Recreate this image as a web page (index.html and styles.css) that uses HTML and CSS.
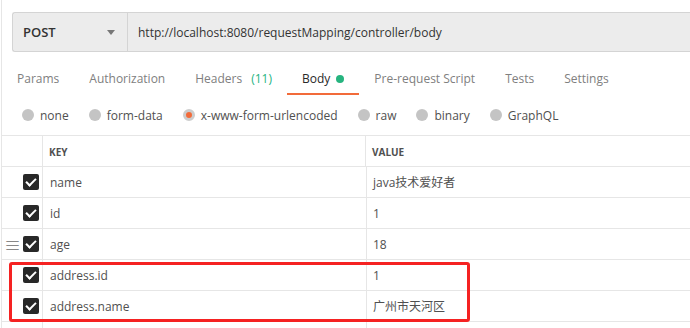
FILE: index.html
```html
<!DOCTYPE html>
<html>
<head>
<meta charset="utf-8">
<link rel="stylesheet" href="styles.css">
</head>
<body>
<div class="page">
    <div class="urlBar">
        <div class="method">POST<span class="caret"></span></div>
        <div class="url">http://localhost:8080/requestMapping/controller/body</div>
    </div>
    <div class="tabs">
        <div class="tab">Params</div>
        <div class="tab">Authorization</div>
        <div class="tab">Headers <span class="count">(11)</span></div>
        <div class="tab active">Body<span class="dot"></span></div>
        <div class="tab">Pre-request Script</div>
        <div class="tab">Tests</div>
        <div class="tab">Settings</div>
    </div>
    <div class="modes">
        <div class="mode"><span class="radio"></span>none</div>
        <div class="mode"><span class="radio"></span>form-data</div>
        <div class="mode"><span class="radio on"></span>x-www-form-urlencoded</div>
        <div class="mode"><span class="radio"></span>raw</div>
        <div class="mode"><span class="radio"></span>binary</div>
        <div class="mode"><span class="radio"></span>GraphQL</div>
    </div>
    <div class="table">
        <div class="row head">
            <div class="cell check"></div>
            <div class="cell key">KEY</div>
            <div class="cell value">VALUE</div>
        </div>
        <div class="row">
            <div class="cell check"><span class="box"></span></div>
            <div class="cell key">name</div>
            <div class="cell value">java技术爱好者</div>
        </div>
        <div class="row">
            <div class="cell check"><span class="box"></span></div>
            <div class="cell key">id</div>
            <div class="cell value">1</div>
        </div>
        <div class="row">
            <div class="cell check"><span class="handle">&#8801;</span><span class="box"></span></div>
            <div class="cell key">age</div>
            <div class="cell value">18</div>
        </div>
        <div class="row">
            <div class="cell check"><span class="box"></span></div>
            <div class="cell key">address.id</div>
            <div class="cell value">1</div>
        </div>
        <div class="row">
            <div class="cell check"><span class="box"></span></div>
            <div class="cell key">address.name</div>
            <div class="cell value">广州市天河区</div>
        </div>
        <div class="row">
            <div class="cell check"></div>
            <div class="cell key"></div>
            <div class="cell value"></div>
        </div>
    </div>
    <div class="mark"></div>
</div>
</body>
</html>
```

FILE: styles.css
```css
body{
    margin: 0;
    overflow: hidden;
    background: #fff;
    font-family: "Open Sans", "Noto Sans CJK SC", sans-serif;
    font-size: 12px;
    color: #505050;
}
.page{
    position: relative;
    box-sizing: border-box;
    margin-left: 1px;
    padding-top: 12px;
    height: 328px;
    overflow: hidden;
    border-left: 1px solid #e6e6e6;
}
.urlBar{
    display: flex;
    height: 38px;
    margin-left: 10px;
    background: #ececec;
    border: 1px solid #d4d4d4;
    border-right: none;
    border-radius: 3px 0 0 3px;
}
.method{
    display: flex;
    align-items: center;
    justify-content: space-between;
    width: 98px;
    padding: 0 6px 0 10px;
    border-right: 1px solid #d4d4d4;
    font-size: 13px;
    font-weight: 600;
    color: #333;
}
.caret{
    width: 0;
    height: 0;
    margin-right: 6px;
    border-left: 4px solid transparent;
    border-right: 4px solid transparent;
    border-top: 5px solid #777;
}
.url{
    display: flex;
    align-items: center;
    padding-left: 10px;
    font-size: 12px;
    color: #333;
}
.tabs{
    display: flex;
    margin-top: 12px;
}
.tab{
    display: flex;
    align-items: center;
    height: 29px;
    padding: 0 15px;
    border-bottom: 2px solid transparent;
    color: #808080;
    white-space: nowrap;
}
.tab .count{
    color: #26b47f;
    margin-left: 9px;
}
.tab.active{
    color: #282828;
    border-bottom-color: #f26b3a;
}
.dot{
    width: 8px;
    height: 8px;
    margin-left: 6px;
    border-radius: 50%;
    background: #26b47f;
}
.modes{
    display: flex;
    align-items: center;
    height: 40px;
    padding-left: 20px;
}
.mode{
    display: flex;
    align-items: center;
    margin-right: 20px;
    color: #505050;
    white-space: nowrap;
}
.radio{
    width: 12px;
    height: 12px;
    margin-right: 6px;
    border-radius: 50%;
    background: #c4c4c4;
}
.radio.on{
    box-sizing: border-box;
    border: 3px solid #cdcdcd;
    background: #f26b3a;
}
.table{
    border-top: 1px solid #e6e6e6;
}
.row{
    display: flex;
    height: 30px;
    border-bottom: 1px solid #e6e6e6;
}
.cell{
    display: flex;
    align-items: center;
}
.check{
    width: 41px;
    justify-content: flex-end;
    padding-right: 3px;
    box-sizing: border-box;
    border-right: 1px solid #e6e6e6;
    position: relative;
}
.key{
    width: 316px;
    padding-left: 7px;
    border-right: 1px solid #e6e6e6;
}
.value{
    flex: 1;
    padding-left: 6px;
}
.head .cell{
    padding-top: 1px;
    font-size: 10px;
    font-weight: 700;
    color: #505050;
}
.head .key{
    padding-left: 6px;
}
.box{
    width: 16px;
    height: 16px;
    border-radius: 2px;
    background: #282828;
    position: relative;
}
.box::after{
    content: "";
    position: absolute;
    left: 5px;
    top: 2px;
    width: 4px;
    height: 8px;
    border-right: 2px solid #fff;
    border-bottom: 2px solid #fff;
    transform: rotate(45deg);
}
.handle{
    position: absolute;
    left: 2px;
    font-size: 17px;
    color: #888;
}
.mark{
    position: absolute;
    left: 7px;
    top: 262px;
    width: 455px;
    height: 54px;
    border: 3px solid #f52222;
    border-radius: 3px;
}
```
